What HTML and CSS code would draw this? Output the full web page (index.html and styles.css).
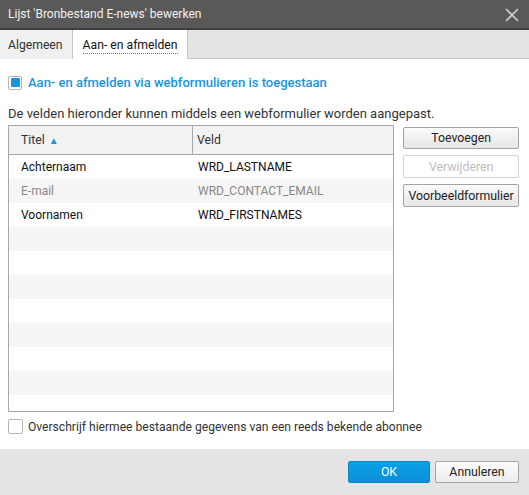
FILE: index.html
```html
<!DOCTYPE html>
<html>
<head>
<meta charset="utf-8">
<link rel="stylesheet" href="styles.css">
</head>
<body>
<div class="dialog">
  <div class="titlebar">
    <span class="title">Lijst 'Bronbestand E-news' bewerken</span>
    <svg class="close" width="14" height="14" viewBox="0 0 14 14"><path d="M1 1L13 13M13 1L1 13" stroke="#cfcfcf" stroke-width="1.6" fill="none"/></svg>
  </div>
  <div class="tabs">
    <div class="tab">Algemeen</div>
    <div class="tab active"><span class="focus">Aan- en afmelden</span></div>
    <div class="tabfill"></div>
  </div>
  <div class="content">
    <label class="check main"><span class="box checked"><span class="dot"></span></span><span>Aan- en afmelden via webformulieren is toegestaan</span></label>
    <p class="desc">De velden hieronder kunnen middels een webformulier worden aangepast.</p>
    <div class="area">
      <div class="table">
        <div class="thead">
          <div class="c1">Titel <span class="sort">&#9650;</span></div>
          <div class="c2">Veld</div>
        </div>
        <div class="tbody">
          <div class="row"><div class="c1">Achternaam</div><div class="c2">WRD_LASTNAME</div></div>
          <div class="row alt dim"><div class="c1">E-mail</div><div class="c2">WRD_CONTACT_EMAIL</div></div>
          <div class="row"><div class="c1">Voornamen</div><div class="c2">WRD_FIRSTNAMES</div></div>
          <div class="row alt"></div>
          <div class="row"></div>
          <div class="row alt"></div>
          <div class="row"></div>
          <div class="row alt"></div>
          <div class="row"></div>
          <div class="row alt"></div>
        </div>
      </div>
      <div class="side">
        <button class="btn">Toevoegen</button>
        <button class="btn disabled">Verwijderen</button>
        <button class="btn">Voorbeeldformulier</button>
      </div>
    </div>
    <label class="check bottom"><span class="box"></span><span>Overschrijf hiermee bestaande gegevens van een reeds bekende abonnee</span></label>
  </div>
  <div class="footer">
    <button class="btn primary">OK</button>
    <button class="btn cancel">Annuleren</button>
  </div>
</div>
</body>
</html>
```
FILE: styles.css
```css
* { box-sizing: border-box; }
html, body { margin: 0; padding: 0; }
body {
  width: 529px; height: 495px; overflow: hidden;
  font-family: Roboto, "Liberation Sans", sans-serif;
  font-size: 12px; color: #222; background: #fff;
}
.dialog { width: 529px; height: 495px; display: flex; flex-direction: column; }
.titlebar {
  height: 30px; background: #595959; border-bottom: 2px solid #3e3e3e;
  display: flex; align-items: center; justify-content: space-between;
  padding: 0 10px 0 8px; color: #f2f2f2;
}
.title { font-size: 12px; }
.close { display: block; margin-top: 1px; }
.tabs {
  height: 29px; background: #e4e4e4; display: flex;
  border-bottom: 1px solid #c6c6c6;
}
.tab {
  background: #f0f0f0; padding: 0 9px 0 8px; display: flex; align-items: center;
  border-right: 1px solid #c6c6c6; color: #333; height: 29px; font-size: 12.2px;
}
.tab.active {
  background: #fff; height: 29px; padding: 0 9px 0 10px;
  margin-bottom: -1px; border-right: 1px solid #c6c6c6; color: #111;
}
.focus { border-bottom: 1px dotted #777; line-height: 14px; padding-bottom: 1px; margin-top: 2px; }
.tabfill { flex: 1; }
.content { flex: 1; padding: 16px 10px 0 8px; }
.check { display: flex; align-items: center; gap: 5px; }
.box {
  width: 15px; height: 15px; border: 1px solid #b4b4b4; border-radius: 2px;
  background: #fff; display: flex; align-items: center; justify-content: center;
}
.dot { width: 9px; height: 9px; background: #1496e0; border-radius: 1px; }
.main { color: #1a95dc; font-weight: 500; font-size: 13px; height: 15px; gap: 6px; }
.main .box { width: 14px; height: 14px; }
.desc { margin: 16px 0 0; height: 15px; line-height: 15px; color: #333; font-size: 13px; }
.area { display: flex; gap: 9px; margin-top: 4px; }
.table {
  width: 387px; height: 287px; border: 1px solid #a8a8a8; overflow: hidden;
}
.thead {
  height: 29px; display: flex; background: #f2f2f2;
  border-bottom: 1px solid #a8a8a8; color: #333; font-size: 12.2px;
}
.thead .c1 { width: 184px; border-right: 1px solid #a8a8a8; padding-left: 12px; display: flex; align-items: center; }
.thead .c2 { padding-left: 4px; display: flex; align-items: center; }
.sort { color: #1a95dc; font-size: 10px; margin-left: 4px; margin-top: 1px; }
.row { height: 24px; display: flex; align-items: center; color: #111; font-size: 12px; }
.row.alt { background: #f5f5f5; }
.row.dim { color: #888; }
.row .c1 { width: 185px; padding-left: 12px; }
.row .c2 { padding-left: 4px; }
.side { display: flex; flex-direction: column; gap: 6px; width: 116px; padding-top: 2px; }
.btn {
  font-family: Roboto, "Liberation Sans", sans-serif; font-size: 12.3px;
  height: 22px; border: 1px solid #a4a4a4; border-radius: 2px;
  background: linear-gradient(#fafafa, #e6e6e6); color: #222; padding: 0;
}
.side .btn:nth-child(2) { height: 23px; }
.side .btn:nth-child(3) { height: 23px; }
.btn.disabled { background: #fff; border-color: #d4d4d4; color: #bdbdbd; }
.bottom { margin-top: 7px; color: #333; font-size: 12.1px; }
.footer {
  height: 46px; background: #e4e4e4; display: flex; justify-content: flex-end;
  align-items: center; gap: 5px; padding: 0 10px 0 0;
}
.btn.primary {
  width: 82px; background: linear-gradient(#0aa0e8, #0b8fd6); border-color: #0a86c8;
  color: #fff;
}
.btn.cancel { width: 84px; background: linear-gradient(#fdfdfd, #ececec); }
```
